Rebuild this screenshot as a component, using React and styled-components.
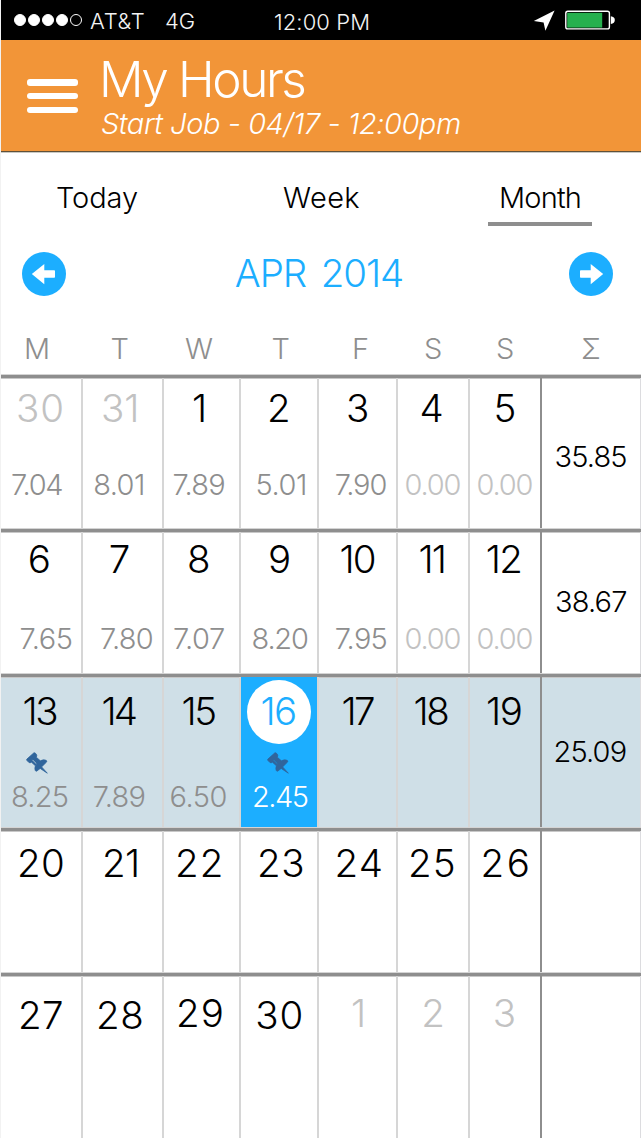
import React from 'react';
import styled, { createGlobalStyle } from 'styled-components';

const GlobalStyle = createGlobalStyle`
  * { box-sizing: border-box; }
  body { margin: 0; background: #fff; }
`;

const BLUE = '#1caeff';
const RULE = '#8e8e8e';
const COLUMNS = [1, 83, 164, 241, 319, 398, 470, 542];

const Screen = styled.div`
  width: 641px;
  height: 1138px;
  overflow: hidden;
  display: flex;
  flex-direction: column;
  background: #fff;
  border-left: 1px solid #f2f2f2;
  color: #000;
  font-family: Inter, 'Liberation Sans', sans-serif;
  font-weight: 300;
`;

const StatusBar = styled.header`
  height: 40px;
  flex: none;
  display: flex;
  align-items: center;
  background: #000;
  color: #f4f4f4;
  padding-left: 13px;
`;

const Signal = styled.div`
  display: flex;
  gap: 2px;
  width: 76px;
`;

const Dot = styled.span`
  width: 12px;
  height: 12px;
  border-radius: 50%;
  border: 1.4px solid #fff;
  background: ${(p) => (p.$filled ? '#fff' : 'transparent')};
`;

const StatusText = styled.span`
  width: ${(p) => p.$width}px;
  font-size: 22px;
  line-height: 30px;
  letter-spacing: ${(p) => p.$tracking || 0}px;
  padding-top: ${(p) => p.$drop || 0}px;
  white-space: nowrap;
`;

const StatusIcons = styled.svg`
  display: block;
  width: 84px;
  height: 22px;
`;

const TitleBar = styled.div`
  height: 113px;
  flex: none;
  display: flex;
  padding-left: 26px;
  background: #f29538;
  border-bottom: 1px solid #c9c9c4;
  box-shadow: inset 0 -1px 0 #5f5039;
  color: #fff;
`;

const MenuButton = styled.button`
  width: 51px;
  height: 34px;
  margin: 39px 20px 0 0;
  padding: 0;
  border: 0;
  background: none;
  display: flex;
  flex-direction: column;
  justify-content: space-between;
`;

const MenuBar = styled.span`
  width: 51px;
  height: 6.5px;
  border-radius: 3px;
  background: #fff;
`;

const Titles = styled.div`
  display: flex;
  flex-direction: column;
`;

const Title = styled.h1`
  margin: 9px 0 -1px 1px;
  font-size: 49.5px;
  font-weight: 340;
  line-height: 60px;
  letter-spacing: -2.4px;
`;

const Subtitle = styled.p`
  margin: 0 0 0 3px;
  font-size: 29px;
  font-style: italic;
  line-height: 32px;
  letter-spacing: -0.45px;
  white-space: nowrap;
`;

const Tabs = styled.nav`
  height: 73px;
  flex: none;
  display: flex;
  padding: 25px 49px 0 43px;
  justify-content: space-between;
`;

const Tab = styled.a`
  height: 48px;
  width: 104px;
  padding-left: ${(p) => p.$inset}px;
  font-size: 29px;
  line-height: 40px;
  letter-spacing: ${(p) => p.$tracking}px;
  border-bottom: 4px solid ${(p) => (p.$active ? RULE : 'transparent')};
`;

const MonthNav = styled.div`
  height: 96px;
  flex: none;
  display: flex;
  justify-content: space-between;
  align-items: center;
  padding: 0 28px 0 21px;
`;

const RoundButton = styled.button`
  width: 44px;
  height: 44px;
  padding: 0;
  border: 0;
  border-radius: 50%;
  background: ${BLUE};
  svg { display: block; transform: ${(p) => (p.$next ? 'scaleX(-1)' : 'none')}; }
`;

const MonthName = styled.h2`
  margin: 0 0 2px 3px;
  color: ${BLUE};
  font-size: 38.5px;
  font-weight: 300;
  line-height: 46px;
  letter-spacing: -1.1px;
  word-spacing: 5px;
`;

const WeekdayRow = styled.div`
  height: 53px;
  flex: none;
  display: flex;
  color: ${RULE};
`;

const Slot = styled.div`
  width: ${(p) => p.$width}px;
  flex: none;
  padding-top: 7px;
  font-size: 29px;
  line-height: 40px;
`;

const WeekRow = styled.section`
  position: relative;
  height: ${(p) => p.$height}px;
  flex: none;
  display: flex;
  border-top: 3px solid ${RULE};
  box-shadow: 0 -1px 0 #d4d4d4, inset 0 1px 0 #c8c8c8;
  background: ${(p) => (p.$current ? '#cfdfe7' : '#fff')};
`;

const DayCell = styled.div`
  width: ${(p) => p.$width}px;
  flex: none;
  padding-top: ${(p) => p.$top}px;
  border-right: 2px solid ${(p) => (p.$last ? RULE : '#d6d6d6')};
  background: ${(p) => (p.$today ? BLUE : 'transparent')};
`;

const TotalCell = styled.div`
  width: 99px;
  flex: none;
  padding-top: ${(p) => p.$top}px;
  border-right: 1px solid #dcdcdf;
`;

const Text = styled.span`
  display: block;
  width: max-content;
  margin-left: ${(p) => p.$left}px;
  letter-spacing: ${(p) => p.$tracking || 0}px;
  white-space: nowrap;
`;

const DayNumber = styled(Text)`
  font-size: 38.5px;
  font-weight: 340;
  line-height: 40px;
  color: ${(p) => (p.$today ? BLUE : p.$muted ? '#c2c2c2' : '#000')};
`;

const TodayDisc = styled.div`
  width: 64px;
  height: 64px;
  margin: -11px 0 -13px 6px;
  padding-top: 11px;
  border-radius: 50%;
  background: #fff;
`;

const Hours = styled(Text)`
  font-size: 29px;
  line-height: 30px;
  color: ${(p) => (p.$today ? '#fff' : p.$muted ? '#c2c2c2' : RULE)};
`;

const Total = styled(Text)`
  font-size: 29px;
  line-height: 30px;
  letter-spacing: -0.85px;
`;

const Gap = styled.div`
  height: ${(p) => p.$height}px;
`;

const PinSlot = styled(Gap)`
  padding: 21px 0 0 ${(p) => p.$left}px;
`;

const Pin = styled.svg`
  display: block;
  width: 22px;
  height: 22px;
`;

const PinIcon = ({ gap }) => (
  <Pin viewBox="-0.5 -0.5 22 22">
    <path
      d="M.4 6.6 7.2.5Q8.4-.1 9.2 1L10.2 2.4Q10.5 3.2 9.8 4.7L13.8 8.3Q17.2 6.6 19.6 7.8Q20.7 8.5 20 9.6L15.1 14.4L20.8 20.7L13.7 15.9L10.3 18.6Q9.2 19 8.7 17.8Q8 15.8 8.9 13.3L5 9.7Q3.8 10.5 2.5 10.1L.5 8Q-.2 7.2.4 6.6Z"
      fill="#30659c"
      stroke="#30659c"
      strokeWidth="0.8"
      strokeLinejoin="round"
    />
    <path d="M6 7.4 9.8 11.2" stroke={gap} strokeWidth="0.8" fill="none" />
  </Pin>
);

const ArrowIcon = () => (
  <svg width="44" height="44" viewBox="0 0 44 44">
    <path d="M9.8 22 22.3 12V18.3H32.2Q33 18.3 33 19V25Q33 25.7 32.2 25.7H22.3V32.2Z" fill="#fff" />
  </svg>
);

const WEEKDAYS = [
  ['M', 26, 2], ['T', 111.5, 1], ['W', 185, 0], ['T', 272.5, 1],
  ['F', 354, 2], ['S', 425, 1], ['S', 497, 1], ['Σ', 582.5, 1.5],
];

// Each day: [number, number left, tracking, hours, hours left, hours tracking, lift]
const WEEKS = [
  {
    height: 154, top: 10, gap: 41.5, totalTop: 63.5, total: '35.85', totalLeft: 554.5,
    days: [
      ['30', 16, 1, '7.04', 11, -1.2], ['31', 101, 0, '8.01', 93.3, -0.6],
      ['1', 192, 0, '7.89', 172.5, -0.7], ['2', 267, 0, '5.01', 255.5, -0.4],
      ['3', 346, 0, '7.90', 334.7, -1.1], ['4', 419.5, 0, '0.00', 404.5, -1.2],
      ['5', 493.5, 0, '0.00', 476.5, -1.2],
    ],
    muted: [0, 1],
  },
  {
    height: 145, top: 7, gap: 44.5, totalTop: 54.5, total: '38.67', totalLeft: 555,
    days: [
      ['6', 27.7, 0, '7.65', 19.5, -0.4], ['7', 108.7, 0, '7.80', 100, -0.7],
      ['8', 187, 0, '7.07', 173, -0.5], ['9', 268, 0, '8.20', 251.5, -1.2],
      ['10', 339.5, -2, '7.95', 334.7, -0.7], ['11', 418.5, -2, '0.00', 404.5, -1.2],
      ['12', 485.7, -1.7, '0.00', 476.5, -1.2],
    ],
    muted: [],
  },
  {
    height: 154, top: 14, gap: 50.5, totalTop: 59.5, total: '25.09', totalLeft: 553.5,
    current: true,
    days: [
      ['13', 22.5, -2.4, '8.25', 11, -0.8], ['14', 101.5, -3, '7.89', 92.8, -0.7],
      ['15', 181.5, -2.4, '6.50', 169.5, -0.5], ['16', 260.5, -1.7, '2.45', 252, -1.5],
      ['17', 341.5, -2.6], ['18', 413.5, -2.4], ['19', 486, -1.4],
    ],
    muted: [],
  },
  {
    height: 145, top: 12,
    days: [
      ['20', 17, 0.3], ['21', 102, -0.7], ['22', 175, 1], ['23', 257, 0.7],
      ['24', 334.5, 1.2], ['25', 408, 1.2], ['26', 480.5, 2.5],
    ],
    muted: [],
  },
  {
    height: 165, top: 19,
    days: [
      ['27', 18, 0.4], ['28', 96, 0.7], ['29', 176, 1, null, 0, 0, -2],
      ['30', 255.3, 0.8], ['1', 351, 0, null, 0, 0, -2], ['2', 421.3, 0, null, 0, 0, -2],
      ['3', 492.7, 0, null, 0, 0, -2],
    ],
    muted: [4, 5, 6],
  },
];

function Day({ day, index, week }) {
  const [number, left, tracking, hours, hoursLeft, hoursTracking, lift = 0] = day;
  const start = COLUMNS[index];
  const today = number === '16';
  const pinned = today || number === '13';
  const label = (
    <DayNumber
      $left={left - start - (today ? 6 : 0)}
      $tracking={tracking}
      $muted={week.muted.includes(index)}
      $today={today}
    >
      {number}
    </DayNumber>
  );
  return (
    <DayCell
      $width={COLUMNS[index + 1] - start}
      $top={week.top + lift}
      $today={today}
      $last={index === 6}
    >
      {today ? <TodayDisc>{label}</TodayDisc> : label}
      {pinned ? (
        <PinSlot $height={week.gap} $left={today ? 25.5 : 25}>
          <PinIcon gap={today ? '#1b8fd6' : '#cfdfe7'} />
        </PinSlot>
      ) : (
        <Gap $height={week.gap || 0} />
      )}
      {hours && (
        <Hours
          $left={hoursLeft - start}
          $tracking={hoursTracking}
          $today={today}
          $muted={hours === '0.00'}
        >
          {hours}
        </Hours>
      )}
    </DayCell>
  );
}

export default function App() {
  return (
    <>
      <GlobalStyle />
      <Screen>
        <StatusBar>
          <Signal>
            {[1, 1, 1, 1, 0].map((filled, i) => <Dot key={i} $filled={!!filled} />)}
          </Signal>
          <StatusText $width={75} $tracking={0.7} $drop={1}>AT&amp;T</StatusText>
          <StatusText $width={109} $drop={1}>4G</StatusText>
          <StatusText $width={259} $tracking={0.1} $drop={3}>12:00 PM</StatusText>
          <StatusIcons viewBox="0 0 84 22">
            <path d="M.8 12 21.6 1.4 12.4 21.8 10.6 13.4Z" fill="#fff" />
            <rect x="32.8" y="2.3" width="43.6" height="17.6" rx="2" fill="none" stroke="#fff" strokeWidth="1.4" />
            <rect x="34.2" y="3.8" width="35" height="14.8" fill="#26b04e" />
            <path d="M77.8 7.2Q81.8 7.6 81.8 11.1T77.8 15Z" fill="#fff" />
          </StatusIcons>
        </StatusBar>

        <TitleBar>
          <MenuButton aria-label="Menu">
            <MenuBar /><MenuBar /><MenuBar />
          </MenuButton>
          <Titles>
            <Title>My Hours</Title>
            <Subtitle>Start Job - 04/17 - 12:00pm</Subtitle>
          </Titles>
        </TitleBar>

        <Tabs>
          <Tab $inset={12} $tracking={-0.1}>Today</Tab>
          <Tab $inset={17} $tracking={0.4}>Week</Tab>
          <Tab $inset={11} $tracking={-0.8} $active>Month</Tab>
        </Tabs>

        <MonthNav>
          <RoundButton aria-label="Previous month"><ArrowIcon /></RoundButton>
          <MonthName>APR 2014</MonthName>
          <RoundButton aria-label="Next month" $next><ArrowIcon /></RoundButton>
        </MonthNav>

        <WeekdayRow>
          {WEEKDAYS.map(([name, left, bearing], i) => (
            <Slot key={i} $width={(COLUMNS[i + 1] || 641) - COLUMNS[i]}>
              <Text $left={left - bearing - COLUMNS[i]}>{name}</Text>
            </Slot>
          ))}
        </WeekdayRow>

        {WEEKS.map((week, w) => (
          <WeekRow key={w} $height={week.height} $current={week.current}>
            {week.days.map((day, i) => <Day key={i} day={day} index={i} week={week} />)}
            <TotalCell $top={week.totalTop || 0}>
              {week.total && <Total $left={week.totalLeft - 542}>{week.total}</Total>}
            </TotalCell>
          </WeekRow>
        ))}
      </Screen>
    </>
  );
}
